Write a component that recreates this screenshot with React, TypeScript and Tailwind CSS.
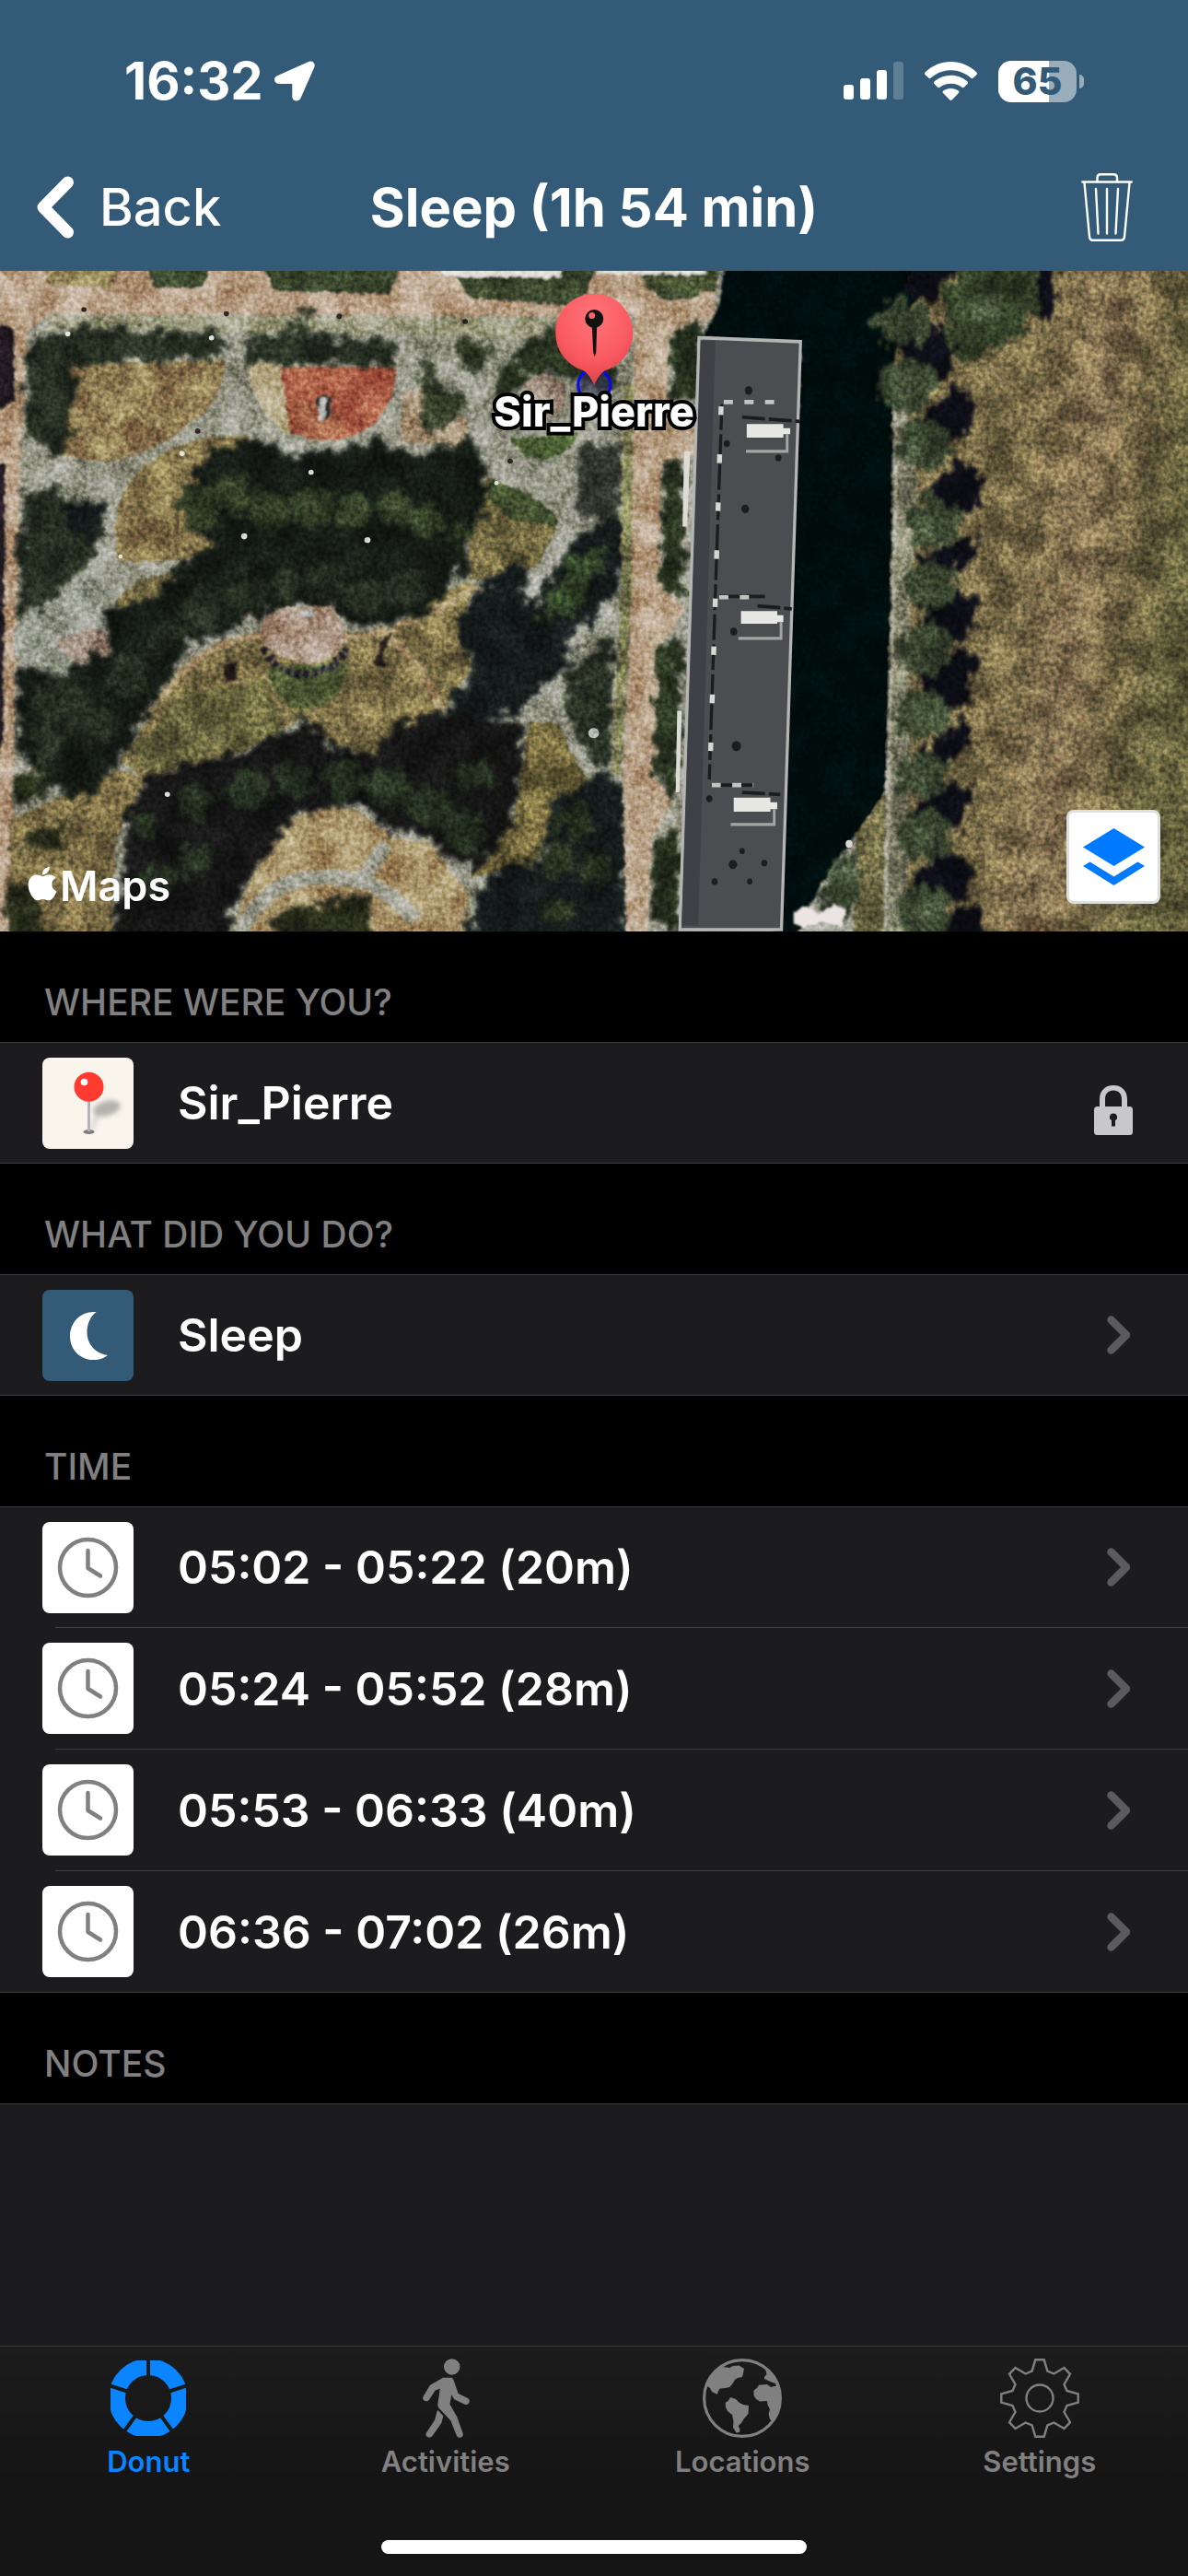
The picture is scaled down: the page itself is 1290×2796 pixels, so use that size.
import React, { useState } from 'react';
import { FaApple } from 'react-icons/fa';

const timeSlots = [
  { id: 1, label: '05:02 - 05:22 (20m)' },
  { id: 2, label: '05:24 - 05:52 (28m)' },
  { id: 3, label: '05:53 - 06:33 (40m)' },
  { id: 4, label: '06:36 - 07:02 (26m)' }
];

const StatusBar: React.FC = () => (
  <div className="flex h-44 items-center justify-between pl-[135px] pr-[113px]">
    <div className="flex items-center gap-3">
      <span className="text-[56px] leading-none font-bold">16:32</span>
      <svg width="44" height="44" viewBox="0 0 44 44" fill="currentColor" aria-hidden="true">
        <path d="M36.5 1.2C41 -0.8 45 2.5 43.3 7L28.5 40.5C26.5 45 19.5 44.5 19.3 39V25H5C-0.5 24.8 -1.8 18.5 3 16.3Z" />
      </svg>
    </div>
    <div className="flex items-center">
      <svg width="65" height="42" viewBox="0 0 65 42" fill="currentColor" aria-hidden="true">
        <rect x="0" y="25" width="11" height="16" rx="3" />
        <rect x="18" y="18" width="11" height="23" rx="3" />
        <rect x="36" y="9" width="11" height="32" rx="3" />
        <rect x="54" y="0" width="11" height="41" rx="3" opacity="0.22" />
      </svg>
      <svg className="ml-[23px]" width="57" height="42" viewBox="0 0 57 42" fill="currentColor" aria-hidden="true">
        <path d="M28.5 0C39.5 0 49 4.4 56.2 11.2C57.2 12.2 57.2 13.2 56.3 14.2L52.7 17.6C51.9 18.4 51 18.3 50.2 17.6C44.3 12.3 36.7 9.2 28.5 9.2S12.7 12.3 6.8 17.6C6 18.3 5.1 18.4 4.3 17.6L0.7 14.2C-0.2 13.2 -0.2 12.2 0.8 11.2C8 4.4 17.5 0 28.5 0Z" />
        <path d="M28.5 14.7C35.5 14.7 41.6 17.2 46.3 21.3C47.4 22.2 47.3 23.3 46.5 24.1L42.8 27.7C42 28.4 41.2 28.3 40.4 27.7C37.2 25.2 33.1 23.7 28.5 23.7S19.8 25.2 16.6 27.7C15.8 28.3 15 28.4 14.2 27.7L10.5 24.1C9.7 23.3 9.6 22.2 10.7 21.3C15.4 17.2 21.5 14.7 28.5 14.7Z" />
        <path d="M28.5 29C31.7 29 34.5 30 36.7 31.6C37.7 32.4 37.7 33.2 36.9 34.1L29.9 41.2C28.9 42.2 28.1 42.2 27.1 41.2L20.1 34.1C19.3 33.2 19.3 32.4 20.3 31.6C22.5 30 25.3 29 28.5 29Z" />
      </svg>
      <div className="ml-[23px] flex items-center gap-[3px]">
        <div className="flex h-[45px] w-[85px] items-center justify-center rounded-[14px] bg-linear-to-r from-white from-65% to-[#99adbb] to-65% text-[41px] leading-none font-extrabold text-[#335b77]">
          65
        </div>
        <div className="h-[15px] w-[5px] rounded-r-full bg-[#99adbb]" />
      </div>
    </div>
  </div>
);

const Chevron: React.FC = () => (
  <svg className="mr-[2px] shrink-0" width="26" height="42" viewBox="0 0 26 42" fill="none" stroke="#5b5b5f" strokeWidth="8.5" strokeLinecap="round" strokeLinejoin="round" aria-hidden="true">
    <path d="M4.5 4.5L21 21L4.5 37.5" />
  </svg>
);

const Lock: React.FC = () => (
  <svg className="shrink-0" width="42" height="70" viewBox="0 0 42 70" fill="#c7c7cc" role="img" aria-label="Locked">
    <path fillRule="evenodd" d="M6 40V31C6 22 12 16 21 16S36 22 36 31V40ZM12 40H30V31C30 25 26.5 21.5 21 21.5S12 25 12 31Z" />
    <rect x="0" y="39" width="42" height="31" rx="3.5" />
    <path fill="#1c1c1e" d="M21 46.5A4 4 0 0 1 23 54V60.5H19V54A4 4 0 0 1 21 46.5Z" />
  </svg>
);

const PinTile: React.FC = () => (
  <svg className="size-[99px] shrink-0 rounded-[8px]" viewBox="0 0 99 99" aria-hidden="true">
    <defs>
      <filter id="pin-shadow" x="-50%" y="-50%" width="200%" height="200%">
        <feGaussianBlur stdDeviation="2.5" />
      </filter>
    </defs>
    <rect width="99" height="99" fill="#f9f4ec" />
    <g filter="url(#pin-shadow)" fill="#b5b2ad">
      <ellipse cx="70" cy="55" rx="15" ry="8" transform="rotate(-15 70 55)" />
      <path d="M58 60L63 62L54 80H51Z" opacity="0.5" />
    </g>
    <ellipse cx="50.5" cy="80.5" rx="6" ry="2.6" fill="#7d7d7d" />
    <rect x="49" y="46" width="3" height="34" fill="#b4b4b8" />
    <circle cx="50.5" cy="31.7" r="16" fill="#ff3b30" />
    <circle cx="45.5" cy="26.5" r="3.8" fill="#fff" />
  </svg>
);

const MoonTile: React.FC = () => (
  <svg className="size-[99px] shrink-0 rounded-[8px]" viewBox="0 0 99 99" aria-hidden="true">
    <rect width="99" height="99" fill="#335b77" />
    <path fill="#fff" d="M58.5 24C42 22.5 30 35 30 50C30 65.5 41.5 76 55 76C62 76 67 74 71 71C57 69 48.5 58 48.5 46C48.5 37 52 29 58.5 24Z" />
  </svg>
);

const ClockTile: React.FC = () => (
  <svg className="size-[99px] shrink-0 rounded-[8px]" viewBox="0 0 99 99" fill="none" stroke="#808080" strokeWidth="4.5" strokeLinecap="round" strokeLinejoin="round" aria-hidden="true">
    <rect width="99" height="99" fill="#fff" stroke="none" />
    <circle cx="49.5" cy="49.5" r="30.5" />
    <path d="M49.5 31V50L63 58.5" />
  </svg>
);

// Aerial view of the park, the promenade, the apartment block and the canal
const Satellite: React.FC = () => (
  <svg className="absolute inset-0 h-full w-full" viewBox="0 0 1290 717" preserveAspectRatio="xMidYMid slice" aria-hidden="true">
    <defs>
      <filter id="rough" x="-5%" y="-5%" width="110%" height="110%">
        <feTurbulence type="fractalNoise" baseFrequency="0.035" numOctaves="4" seed="4" result="n" />
        <feDisplacementMap in="SourceGraphic" in2="n" scale="70" xChannelSelector="R" yChannelSelector="G" />
        <feGaussianBlur stdDeviation="4" />
      </filter>
      <filter id="soft" x="-5%" y="-5%" width="110%" height="110%">
        <feTurbulence type="fractalNoise" baseFrequency="0.06" numOctaves="2" seed="9" result="n" />
        <feDisplacementMap in="SourceGraphic" in2="n" scale="14" xChannelSelector="R" yChannelSelector="G" />
        <feGaussianBlur stdDeviation="2.5" />
      </filter>
      <filter id="mottle" x="0" y="0" width="100%" height="100%" colorInterpolationFilters="sRGB">
        <feTurbulence type="fractalNoise" baseFrequency="0.03" numOctaves="4" seed="12" />
        <feColorMatrix values="2 0 0 0 -0.54  2 0 0 0 -0.53  2 0 0 0 -0.56  0 0 0 0 1" />
      </filter>
      <filter id="grain" x="0" y="0" width="100%" height="100%" colorInterpolationFilters="sRGB">
        <feTurbulence type="fractalNoise" baseFrequency="0.2" numOctaves="2" seed="3" />
        <feColorMatrix values="1.8 0 0 0 -0.42  1.6 0.2 0 0 -0.42  1.6 0 0.2 0 -0.42  0 0 0 0 1" />
      </filter>
      <linearGradient id="field" x1="0" x2="1" y1="0" y2="0.25">
        <stop offset="0" stopColor="#7a6e4b" />
        <stop offset="0.5" stopColor="#7b6d4a" />
        <stop offset="0.7" stopColor="#877354" />
        <stop offset="0.82" stopColor="#776948" />
        <stop offset="1" stopColor="#68633f" />
      </linearGradient>
    </defs>

    <rect width="1290" height="717" fill="#98988b" />

    <g transform="scale(0.4847 0.4662) translate(0 -9)">
      <g filter="url(#soft)">
        {/* promenades */}
        <path fill="#baa28b" d="M-40 -40H1600V115H1240L110 110L60 150L45 500L20 1620H-40Z" />
        <path fill="#9e9d84" d="M110 112L1240 118V170L890 155L110 150Z" />
        <path fill="#94845a" d="M95 0H275L245 48L110 40Z" />
        <path fill="#3b462e" d="M320 -20H485L450 50H350ZM580 -20H912L870 64L615 55ZM1000 -20H1345L1300 92L1050 72ZM1420 30L1568 24V70L1460 80Z" />
        <path fill="#e2e1da" d="M985 4H1258V24H1000ZM1420 4H1568V14H1420Z" />
        <path fill="#251f26" d="M-20 135L30 140L34 310L-20 345ZM-20 458H12L8 1100L-20 1200Z" />
        {/* lawns */}
        <path fill="#948059" d="M150 225L502 216Q508 300 430 362Q340 440 230 454L130 436Z" />
        <path fill="#8b7a51" d="M258 600Q262 510 340 450Q430 385 560 395L560 640L410 682L268 688Q255 650 258 600Z" />
        <path fill="#bdb294" d="M552 220H650V396Q570 345 552 220Z" />
        <path fill="#ae624c" d="M628 232H888Q884 320 830 372Q780 405 720 404Q670 400 650 382Z" />
        <path fill="#8b7750" d="M760 330Q790 395 720 404Q670 400 650 382L640 300Z" opacity="0.2" />
        <path fill="#a8937a" d="M905 290L950 280L1050 360L1040 420L895 405Z" />
        <path fill="#4c6134" d="M1145 400Q1160 440 1215 448Q1275 440 1300 385Z" />
        <path fill="#7a7046" d="M1090 492Q1245 545 1255 610Q1245 690 1180 705L1050 730V640Z" />
        <path fill="#445230" d="M1095 495Q1240 540 1253 605L1150 590L1090 540Z" />
        <path fill="#80734b" d="M320 1070Q420 900 560 850L870 850L960 770L1060 730L1040 830L1060 930L990 1040L850 1150L740 1110L680 1050L540 1130L330 1195L270 1150Z" />
        <path fill="#565a35" d="M400 1000L600 960L640 1090L330 1190L300 1130Z" opacity="0.5" />
        <path fill="#746a45" d="M250 790L300 735L400 705L380 770L320 810Z" />
        <path fill="#7f6f48" d="M20 1290L260 1170L330 1190L260 1330L250 1600H20Z" />
        <path fill="#a9946d" d="M505 1600Q560 1380 640 1290L730 1250L800 1265L880 1330L960 1340L1050 1460V1600Z" />
        <path fill="#71663e" d="M1185 1060H1255L1330 1190L1250 1300L1190 1400L1050 1420L1150 1290Z" />
        {/* footpaths */}
        <g fill="none" stroke="#a8926e" strokeWidth="15">
          <path d="M325 1060Q430 862 600 858M770 864Q880 864 1070 745M872 864Q955 930 987 1035" />
        </g>
        <g fill="none" stroke="#a1a195" strokeWidth="34">
          <path d="M520 1600Q570 1420 730 1420Q850 1415 930 1520M815 1420L865 1345" />
          <path d="M1270 600L1165 820M1400 790Q1240 880 1230 985L1330 1185" />
        </g>
        <path fill="#989a8f" d="M30 840L220 680L245 770L240 860L140 950L30 900Z" />
        <path fill="#a08e82" d="M120 870L210 840L260 860L250 910L170 930Z" />
      </g>

      {/* tree crowns and their shadows */}
      <g filter="url(#rough)">
        <path fill="#262d20" d="M62 195Q90 135 200 140L500 155L500 212L175 228L145 440L58 410Z" />
        <path fill="#272e21" d="M550 165L640 160L680 100L700 165L890 168L885 232L565 222Z" />
        <path fill="#363e29" d="M945 225L975 225L980 290L1035 285L1040 330L990 385L945 380ZM1005 172H1115L1060 258Z" />
        <path fill="#2a3522" d="M1105 280L1160 190L1230 130L1290 190L1385 250L1370 300L1290 270L1240 240L1170 260L1140 310Z" />
        <path fill="#141a19" d="M400 540L460 430L550 395L680 440L850 400L930 440L1060 400L1098 520L1050 650L1040 710L960 800L880 830L780 830L740 790L620 790L510 850L420 880L320 1060L300 1110L200 1240L100 1220L40 1100L35 920L130 960L250 880L230 790L340 780L400 690L500 640L420 620Z" />
        <g fill="#303c26">
          <circle cx="450" cy="560" r="52" /><circle cx="530" cy="530" r="44" /><circle cx="610" cy="570" r="44" />
          <circle cx="700" cy="560" r="46" /><circle cx="790" cy="570" r="42" /><circle cx="880" cy="560" r="40" />
          <circle cx="950" cy="590" r="38" /><circle cx="1030" cy="620" r="30" />
        </g>
        <g fill="#252e20">
          <circle cx="460" cy="790" r="44" /><circle cx="550" cy="760" r="46" /><circle cx="650" cy="740" r="40" />
          <circle cx="730" cy="740" r="44" /><circle cx="820" cy="770" r="46" /><circle cx="910" cy="750" r="44" />
          <circle cx="120" cy="1010" r="50" /><circle cx="190" cy="1060" r="56" /><circle cx="100" cy="1110" r="40" />
          <circle cx="290" cy="950" r="46" /><circle cx="370" cy="860" r="40" />
        </g>
        <path fill="#252e20" d="M50 522L110 512L150 548L232 548L240 620L190 700L90 800L42 800Z" />
        <path fill="#121a1c" d="M140 560L230 550L225 640L170 630Z" />
        <path fill="#33362f" d="M1300 420L1390 410L1395 580L1300 590Z" />
        <path fill="#171f1c" d="M1180 690L1130 700L1060 760L1010 850L1070 920L1000 1040L1100 1060L1180 1010L1270 920L1290 860L1380 760L1405 680L1408 570L1310 610L1230 720L1180 800Z" />
        <path fill="#35462a" d="M1270 690L1350 640L1350 700L1280 800L1210 820L1220 780Z" />
        <path fill="#252e21" d="M1275 940L1375 850L1370 1160L1330 1160L1270 1030Z" />
        <path fill="#121818" d="M280 1260L350 1180L550 1130L690 1055L740 1110L830 1140L880 1060L1000 1040L1180 1070L1160 1200L1150 1290L1080 1400L1030 1400L960 1330L880 1310L800 1245L650 1280L580 1400L520 1500L500 1600H230L280 1420Z" />
        <g fill="#273222">
          <circle cx="330" cy="1300" r="34" /><circle cx="440" cy="1250" r="40" /><circle cx="560" cy="1220" r="46" />
          <circle cx="660" cy="1190" r="40" /><circle cx="770" cy="1200" r="40" /><circle cx="870" cy="1210" r="48" />
          <circle cx="960" cy="1260" r="48" /><circle cx="1040" cy="1310" r="44" /><circle cx="1060" cy="1180" r="34" />
          <circle cx="350" cy="1430" r="40" /><circle cx="440" cy="1380" r="36" />
        </g>
        <path fill="#151b1b" d="M1240 1240L1350 1170L1405 1230V1600H1040L1080 1440L1150 1380L1205 1400Z" />
        <g fill="#2a3424">
          <circle cx="1290" cy="1290" r="42" /><circle cx="1250" cy="1380" r="38" /><circle cx="1330" cy="1400" r="34" />
          <circle cx="1250" cy="1500" r="36" />
        </g>
        <path fill="#2b2f1e" d="M30 1190L110 1170L100 1240L30 1250ZM60 1310L150 1290L130 1370L70 1360ZM20 1430L80 1440L110 1600H20ZM620 1500L820 1470L850 1600H600Z" />
      </g>

      <g filter="url(#soft)">
        {/* bandstand plaza */}
        <path fill="#4a5a32" d="M600 930Q610 1030 690 1030Q770 1020 780 920Z" opacity="0.8" />
        <path fill="none" stroke="#262330" strokeWidth="18" strokeDasharray="14 5" d="M592 885Q620 950 690 948Q755 940 778 885" />
        <path fill="#ab9484" d="M585 845L600 810L640 790H745L776 850Q770 920 690 922Q620 915 585 870Z" />
        <path fill="#aeb2b2" d="M675 800H705V815H675Z" />
        <path fill="#2a2b2e" d="M708 305L722 300L742 300L740 350L715 365Z" />
        <path fill="#b9bbb8" d="M716 305H728V360H712Z" />
        <path fill="#988679" d="M1175 270L1215 245L1265 270L1265 330L1220 350L1180 310Z" />
        <path fill="#251f1e" d="M850 880L876 850L880 855L860 895V930H840ZM500 930L530 920L530 960L505 965Z" />
        {/* eastern promenade */}
        <path fill="#84845a" d="M1395 270H1425L1415 780L1390 1180H1370L1390 780Z" />
        <path fill="#b9a28a" d="M1422 60L1350 40L1380 -20H1440L1480 80L1600 75V120L1500 160L1495 300L1600 430L1482 460L1478 730L1535 795L1482 880L1468 1190L1510 1240L1460 1330L1450 1600H1405L1395 1200L1415 780Z" />
      </g>
      <g fill="#dfe4dc">
        <circle cx="697" cy="478" r="6" /><circle cx="547" cy="627" r="7" /><circle cx="823" cy="636" r="7" />
        <circle cx="375" cy="1228" r="6" /><circle cx="152" cy="156" r="6" /><circle cx="408" cy="434" r="6" />
        <circle cx="270" cy="674" r="5" /><circle cx="1112" cy="503" r="5" /><circle cx="474" cy="165" r="6" />
        <circle cx="1330" cy="1085" r="12" opacity="0.7" />
      </g>
      <g fill="#302523">
        <circle cx="188" cy="99" r="6" /><circle cx="507" cy="109" r="6" /><circle cx="760" cy="115" r="6" />
        <circle cx="1042" cy="127" r="6" /><circle cx="443" cy="382" r="6" /><circle cx="1143" cy="452" r="6" />
      </g>
    </g>

    <g transform="translate(640 0) scale(0.4146 0.4655) translate(0 -9)">
      <rect x="780" y="0" width="800" height="1568" fill="url(#field)" />
      <g filter="url(#soft)">
        <path fill="#06080d" d="M360 -40H940L810 140L790 280L800 330L795 700L783 1215L700 1320L600 1450L510 1620H480L555 200L300 160L340 90Z" />
        <path fill="#424b2e" d="M120 -20H345L330 55H155Z" />
        <path fill="#e2e1da" d="M20 0H305V17H20Z" />
        <path fill="#86856f" d="M797 310H830L860 500L840 800L830 1620H690L720 1320L783 1215Z" />
        <path fill="#6d6744" d="M700 1320L780 1220L768 1620H690Z" />
        <path fill="none" stroke="#a9a899" strokeWidth="9" d="M801 320L802 560L785 1100L772 1620" />
      </g>
      <g filter="url(#rough)">
        <path fill="#2a3422" d="M215 150L290 120V300L210 300ZM190 460L250 430V780L190 740ZM175 880L240 865L232 1230L170 1190ZM165 1330L235 1310V1540L160 1530Z" />
        <path fill="#0c1014" d="M870 -30L990 -30L900 80L820 60ZM1150 -30H1210L1228 80L1190 135L1140 60ZM810 190L900 130L965 180L950 250L860 280ZM870 350L950 280L1010 300L1000 380L930 430ZM880 530L970 450L1028 470L1015 570L900 580ZM860 680L1015 620L1000 690L900 740ZM860 810L960 740L1022 780L1000 860L900 880ZM870 970L960 890L1018 920L985 1020L900 1030ZM840 1150L980 1050L1008 1110L900 1180ZM840 1280L930 1200L1004 1220L980 1310L900 1320ZM840 1430L930 1360L1014 1400L975 1470L900 1480ZM930 1500L1030 1490V1620H930Z" />
        <path fill="#36432c" d="M930 60L990 -30H1160L1190 80L1130 150L1010 225L930 180Z" />
        <g fill="#3a4632">
          <ellipse cx="820" cy="130" rx="74" ry="50" />
          <ellipse cx="835" cy="275" rx="74" ry="64" />
          <ellipse cx="875" cy="415" rx="74" ry="58" />
          <ellipse cx="900" cy="595" rx="72" ry="58" />
          <ellipse cx="890" cy="745" rx="72" ry="54" />
          <ellipse cx="880" cy="895" rx="72" ry="58" />
          <ellipse cx="872" cy="1045" rx="74" ry="56" />
          <ellipse cx="872" cy="1185" rx="70" ry="50" />
          <ellipse cx="876" cy="1330" rx="70" ry="54" />
          <ellipse cx="876" cy="1505" rx="76" ry="60" />
          <path d="M610 1440L680 1350L710 1420L690 1510L600 1480Z" />
        </g>
        <g fill="#4d5b41" opacity="0.8">
          <circle cx="850" cy="120" r="26" /><circle cx="815" cy="280" r="28" /><circle cx="860" cy="430" r="28" />
          <circle cx="885" cy="610" r="28" /><circle cx="870" cy="760" r="26" /><circle cx="865" cy="900" r="26" />
          <circle cx="860" cy="1050" r="26" /><circle cx="865" cy="1190" r="24" /><circle cx="865" cy="1330" r="26" />
          <circle cx="1040" cy="90" r="34" /><circle cx="865" cy="1510" r="28" />
        </g>
      </g>
    </g>

    <rect className="mix-blend-overlay" width="1290" height="717" filter="url(#mottle)" opacity="0.3" />
    <rect className="mix-blend-overlay" width="1290" height="717" filter="url(#grain)" opacity="0.35" />

    {/* apartment block */}
    <g transform="translate(640 0) scale(0.4146 0.4655) translate(0 -9)">
      <path fill="#dcdcd6" d="M248 430H264L256 605H244ZM230 1035H242L236 1225H226Z" />
      <path fill="#4a4e50" stroke="#b4b5b3" strokeWidth="8" d="M287 165L553 174L503 1545H237Z" />
      <path fill="#3f4146" d="M292 172H330L285 1535H242Z" />
      <path fill="none" stroke="#1b1c20" strokeWidth="8" strokeDasharray="60 10" d="M347 320L330 760L314 1195M340 768H460M318 1208H430M400 350L550 360M440 790L530 797M400 1225L500 1230" />
      <path fill="none" stroke="#d8d8d2" strokeWidth="13" strokeDasharray="20 92" d="M345 325L330 770L315 1200" />
      <path fill="none" stroke="#c4c5c0" strokeWidth="10" strokeDasharray="24 30" d="M352 315H485M340 770H440M320 1208H430" />
      <path fill="#e6e7e2" d="M412 366H508V376H526V390H508V398H412ZM397 802H492V812H508V828H492V832H397ZM378 1237H474V1248H492V1264H474V1270H378Z" />
      <path fill="none" stroke="#a4a6a2" strokeWidth="7" d="M518 390V430H410M502 828V866H390M484 1264V1300H370" />
      <g fill="#1c1d21">
        <circle cx="417" cy="288" r="10" /><circle cx="408" cy="564" r="10" /><circle cx="385" cy="1117" r="12" />
        <circle cx="376" cy="1393" r="11" /><circle cx="458" cy="1390" r="8" /><circle cx="328" cy="1433" r="8" />
        <circle cx="420" cy="1433" r="7" /><circle cx="400" cy="1362" r="7" /><circle cx="495" cy="445" r="8" />
        <circle cx="378" cy="850" r="9" /><circle cx="314" cy="1240" r="8" /><circle cx="360" cy="412" r="8" />
      </g>
      <path filter="url(#soft)" fill="#ece4e2" d="M535 1500L580 1492L600 1510L640 1485L672 1500L660 1535L600 1530L560 1540L535 1530Z" />
      <circle cx="680" cy="1345" r="9" fill="#d7d7cf" />
    </g>
  </svg>
);

const MapPin: React.FC = () => (
  <svg width="90" height="120" viewBox="0 0 90 120" aria-hidden="true">
    <defs>
      <radialGradient id="balloon" cx="0.5" cy="0.25" r="0.8">
        <stop offset="0" stopColor="#ff7479" />
        <stop offset="0.6" stopColor="#f95a61" />
        <stop offset="1" stopColor="#dc3a42" />
      </radialGradient>
    </defs>
    <circle cx="45" cy="100" r="17.5" fill="#30305a" fillOpacity="0.5" stroke="#0808f0" strokeWidth="3" />
    <path fill="url(#balloon)" d="M45 1C68.5 1 87 19.5 87 43C87 64 73 79 57 84C52 87 48 93 45 100C42 93 38 87 33 84C17 79 3 64 3 43C3 19.5 21.5 1 45 1Z" />
    <circle cx="45" cy="28" r="10" fill="#121212" />
    <path fill="#121212" d="M42.5 35H48L47 65L45.5 69L44 65Z" />
    <circle cx="42.5" cy="24.5" r="3.5" fill="#f4666c" />
  </svg>
);

const DonutIcon: React.FC = () => (
  <svg width="86" height="86" viewBox="0 0 86 86" aria-hidden="true">
    <mask id="donut-cuts">
      <rect width="86" height="86" fill="#fff" />
      <path stroke="#000" strokeWidth="4" d="M43 43V-5M43 43L88.6 28.2M43 43L71.2 81.8M43 43L14.8 81.8M43 43L-2.6 28.2" />
    </mask>
    <circle cx="43" cy="43" r="34" fill="none" stroke="currentColor" strokeWidth="18" mask="url(#donut-cuts)" />
  </svg>
);

const WalkIcon: React.FC = () => (
  <svg width="86" height="86" viewBox="-18 0 86 86" fill="currentColor" stroke="currentColor" strokeWidth="1.5" strokeLinejoin="round" aria-hidden="true">
    <circle cx="31.7" cy="8.9" r="8" />
    <path d="M22.5 21.5H31.5L33 24L38 38.5L48.5 43.7C51.5 45.5 49.5 50 46 49L34.5 43.5L31 37L28.6 49.5L36.6 63.7L43 81.5C43.5 85.5 38.5 86 37.6 83.5L31 67L17.5 52.5L17 50L19.7 31.3L13 34L6.5 44C4.5 47 0 45 1 42L8.5 29.5Z" />
    <path d="M16.5 57L21.5 62.5L19.7 69.5L9.5 84C7 86 3.5 84 4.3 81.5L13.8 67Z" />
  </svg>
);

const GlobeIcon: React.FC = () => (
  <svg width="86" height="86" viewBox="0 0 86 86" fill="currentColor" aria-hidden="true">
    <circle cx="43" cy="43" r="41.4" fill="none" stroke="currentColor" strokeWidth="3.2" />
    <path d="M22 9L29 10L33 8L39.5 7.5L45 11L44 16L43 20L38 21L35 23L32 28L29 31L25 32L19 32.5L17 35L16 38.7L13 37.5L10 36L8 32L5 30L2 34L5 24L12 14Z" />
    <path d="M30 42L36 44L40 48L44 50L50 51L49.5 60L45 65L42 70L38.7 73L40.5 77L40 80L36.6 80.5L33 75L33.5 68L32 61L27 57L25 53L24.7 48L28 45.5Z" />
    <path d="M61 28.7L70 28L74 31L80 29.5L79 27L74.5 25.5L67 22L67 20L69.5 17L68 11L76 17L84 31L85 43L83 55L76 68L73 66L71.6 60L73 55L70.5 50L70 46L62 46.5L58 44L55.5 40L55.5 34.5L59 32Z" />
  </svg>
);

const GearIcon: React.FC = () => (
  <svg width="86" height="86" viewBox="0 0 86 86" fill="none" stroke="currentColor" strokeWidth="2.4" aria-hidden="true">
    <path d="M38.3 1.3H47.7L51.4 13.5L58.4 16.5L69.5 10L76 16.8L69.5 28L72.5 35L84.7 38.3V47.7L72.5 51L69.5 58L76 69.2L69.5 76L58.4 69.5L51.4 72.5L47.7 84.7H38.3L34.6 72.5L27.6 69.5L16.5 76L10 69.2L16.5 58L13.5 51L1.3 47.7V38.3L13.5 35L16.5 28L10 16.8L16.5 10L27.6 16.5L34.6 13.5Z" />
    <circle cx="43" cy="43" r="14.5" />
  </svg>
);

const tabs = [
  { name: 'Donut', icon: DonutIcon },
  { name: 'Activities', icon: WalkIcon },
  { name: 'Locations', icon: GlobeIcon },
  { name: 'Settings', icon: GearIcon }
];

const SectionTitle: React.FC<{ id?: string; children: React.ReactNode }> = ({ id, children }) => (
  <h2 id={id} className="flex h-[120px] items-center px-12 pt-8 text-[39px] leading-none font-medium text-[#808080]">
    {children}
  </h2>
);

export default function App() {
  const [activeTab, setActiveTab] = useState('Donut');
  const [notes, setNotes] = useState('');

  return (
    <div className="flex min-h-screen w-full flex-col bg-black font-['Inter',sans-serif] text-white">
      <header className="bg-[#335b77]">
        <StatusBar />
        <div className="grid h-[118px] grid-cols-[1fr_auto_1fr] items-center px-10 pb-5">
          <button type="button" className="flex items-center gap-7 justify-self-start text-[56px] leading-none font-medium">
            <svg width="40" height="68" viewBox="0 0 40 68" fill="none" stroke="currentColor" strokeWidth="13" strokeLinecap="round" strokeLinejoin="round" aria-hidden="true">
              <path d="M33.5 7L7 34L33.5 61" />
            </svg>
            Back
          </button>
          <h1 className="text-[58px] leading-none font-bold">Sleep (1h 54 min)</h1>
          <button type="button" aria-label="Delete" className="mr-5 justify-self-end">
            <svg width="56" height="74" viewBox="0 0 56 74" fill="none" stroke="currentColor" strokeWidth="2.4" strokeLinecap="round" strokeLinejoin="round">
              <path d="M1.3 9.5H54.7M17.5 9V5C17.5 2.5 19 1.3 21 1.3H35C37.5 1.3 39 2.5 39 5V9" />
              <path d="M3.5 10.5L9 69C9.3 71.5 10.5 72.7 12.5 72.7H43.5C45.5 72.7 46.7 71.5 47 69L52.5 10.5" />
              <path d="M16 17L18.5 65.5M28 17V65.5M40 17L37.5 65.5" />
            </svg>
          </button>
        </div>
      </header>

      {/* Map */}
      <div className="relative isolate h-[717px] overflow-hidden">
        <Satellite />
        <div className="absolute top-6 left-1/2 flex -translate-x-1/2 flex-col items-center">
          <MapPin />
          <span className="-mt-4 text-[45px] leading-[50px] font-extrabold [-webkit-text-stroke:8px_black] [paint-order:stroke_fill]">
            Sir_Pierre
          </span>
        </div>
        <div className="absolute bottom-6 left-[30px] flex items-center gap-[3px] text-[45px] leading-[50px] font-semibold">
          <FaApple className="mb-[6px] h-[42px] w-8" aria-hidden="true" />
          Maps
        </div>
        <button type="button" aria-label="Map layers" className="absolute right-[30px] bottom-[30px] flex size-[102px] items-center justify-center rounded-[8px] border-3 border-[#dedede] bg-white">
          <svg width="67" height="62" viewBox="0 0 67 62" fill="#007aff" aria-hidden="true">
            <path d="M33.5 0L67 20.5L33.5 41L0 20.5Z" />
            <path d="M0 41L7.5 36.5L33.5 52.5L59.5 36.5L67 41L33.5 62Z" />
          </svg>
        </button>
      </div>

      <section>
        <SectionTitle>WHERE WERE YOU?</SectionTitle>
        <div className="flex h-[132px] items-center border-y border-[#3d3d41] bg-[#1c1c1e] pr-[60px] pl-[46px]">
          <PinTile />
          <span className="ml-12 flex-1 text-[50px] leading-none font-semibold">Sir_Pierre</span>
          <Lock />
        </div>
      </section>

      <section>
        <SectionTitle>WHAT DID YOU DO?</SectionTitle>
        <button type="button" className="flex h-[132px] w-full items-center border-y border-[#3d3d41] bg-[#1c1c1e] pr-[60px] pl-[46px] text-left">
          <MoonTile />
          <span className="ml-12 flex-1 text-[50px] leading-none font-semibold">Sleep</span>
          <Chevron />
        </button>
      </section>

      <section>
        <SectionTitle>TIME</SectionTitle>
        <ul className="border-b border-[#3d3d41] bg-[#1c1c1e]">
          {timeSlots.map((slot, index) => (
            <li key={slot.id} className="flex h-[132px] flex-col first:h-[131px]">
              <div className={index === 0 ? 'h-px bg-[#3d3d41]' : 'ml-[60px] h-px bg-[#3d3d41]'} />
              <button type="button" className="flex w-full flex-1 items-center pr-[60px] pl-[46px] text-left">
                <ClockTile />
                <span className="ml-12 flex-1 text-[50px] leading-none font-semibold">{slot.label}</span>
                <Chevron />
              </button>
            </li>
          ))}
        </ul>
      </section>

      <section className="flex flex-1 flex-col">
        <SectionTitle id="notes-title">NOTES</SectionTitle>
        <textarea
          aria-labelledby="notes-title"
          value={notes}
          onChange={(e) => setNotes(e.target.value)}
          className="w-full flex-1 resize-none border-t border-[#3d3d41] bg-[#1c1c1e] px-12 py-6 text-[50px] outline-none"
        />
      </section>

      {/* Tab bar */}
      <footer className="flex h-[250px] flex-col items-center border-t border-[#3a3a3a] bg-linear-to-b from-[#1c1c1c] to-[#151515] to-60%">
        <nav className="grid w-full grid-cols-4 pt-[13px]">
          {tabs.map(({ name, icon: Icon }) => (
            <button
              key={name}
              type="button"
              onClick={() => setActiveTab(name)}
              className={`flex flex-col items-center gap-2 text-[31px] leading-9 font-semibold ${activeTab === name ? 'text-[#0a84ff]' : 'text-[#808080]'}`}
            >
              <Icon />
              {name}
            </button>
          ))}
        </nav>
        <div className="mt-auto mb-6 h-[15px] w-[462px] rounded-full bg-white" />
      </footer>
    </div>
  );
}
